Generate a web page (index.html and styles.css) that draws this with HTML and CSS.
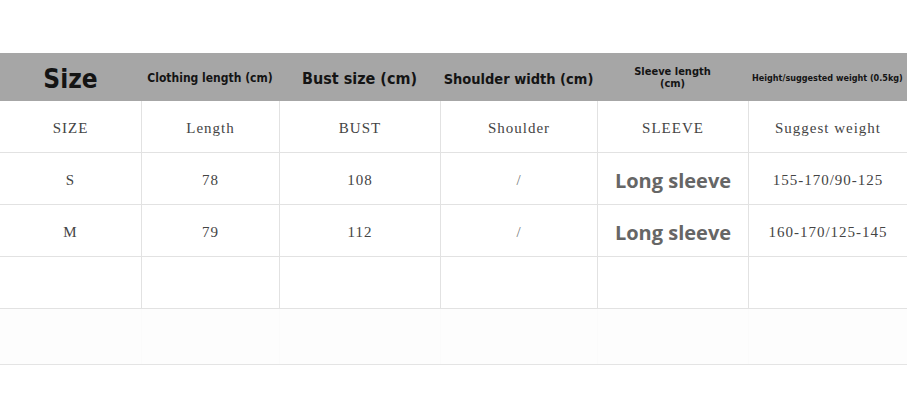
FILE: index.html
```html
<!DOCTYPE html>
<html>
<head>
<meta charset="utf-8">
<link rel="stylesheet" href="styles.css">
</head>
<body>
<div class="page">
  <div class="table">
    <div class="row head">
      <div class="cell h-size">Size</div>
      <div class="cell h-sm">Clothing length (cm)</div>
      <div class="cell h-md">Bust size (cm)</div>
      <div class="cell h-mid">Shoulder width (cm)</div>
      <div class="cell h-xs">Sleeve length<br>(cm)</div>
      <div class="cell h-xxs">Height/suggested weight (0.5kg)</div>
    </div>
    <div class="row">
      <div class="cell">SIZE</div>
      <div class="cell">Length</div>
      <div class="cell">BUST</div>
      <div class="cell">Shoulder</div>
      <div class="cell">SLEEVE</div>
      <div class="cell">Suggest weight</div>
    </div>
    <div class="row">
      <div class="cell">S</div>
      <div class="cell">78</div>
      <div class="cell">108</div>
      <div class="cell slash">/</div>
      <div class="cell long">Long sleeve</div>
      <div class="cell">155-170/90-125</div>
    </div>
    <div class="row">
      <div class="cell">M</div>
      <div class="cell">79</div>
      <div class="cell">112</div>
      <div class="cell slash">/</div>
      <div class="cell long">Long sleeve</div>
      <div class="cell">160-170/125-145</div>
    </div>
    <div class="row">
      <div class="cell"></div>
      <div class="cell"></div>
      <div class="cell"></div>
      <div class="cell"></div>
      <div class="cell"></div>
      <div class="cell"></div>
    </div>
    <div class="row faint">
      <div class="cell"></div>
      <div class="cell"></div>
      <div class="cell"></div>
      <div class="cell"></div>
      <div class="cell"></div>
      <div class="cell"></div>
    </div>
  </div>
</div>
</body>
</html>
```
FILE: styles.css
```css
html, body {
  margin: 0;
  padding: 0;
  background: #ffffff;
}
.page {
  width: 907px;
  height: 419px;
  padding-top: 53px;
  box-sizing: border-box;
  overflow: hidden;
  background: #fff;
}
.table {
  display: flex;
  flex-direction: column;
}
.row {
  display: grid;
  grid-template-columns: 141px 138px 161px 157px 151px 159px;
  height: 52px;
  border-bottom: 1px solid #e2e2e2;
  box-sizing: border-box;
}
.row .cell {
  display: flex;
  align-items: center;
  justify-content: center;
  text-align: center;
  padding-top: 3px;
  border-left: 1px solid #e2e2e2;
  font-family: "Liberation Serif", "DejaVu Serif", serif;
  font-size: 15px;
  letter-spacing: 1px;
  color: #444;
}
.row .cell:first-child {
  border-left: none;
}
.row.head {
  height: 48px;
  background: #a6a6a6;
  border-bottom: none;
}
.row.head .cell {
  padding-top: 2px;
  border-left: none;
  font-family: "DejaVu Sans Condensed", "DejaVu Sans", sans-serif;
  font-stretch: condensed;
  font-weight: 700;
  letter-spacing: 0;
  color: #141414;
  line-height: 1;
  white-space: nowrap;
}
.row.head .h-size { font-size: 26px; padding-top: 4px; }
.row.head .h-sm { font-size: 12px; }
.row.head .h-md { font-size: 16px; padding-top: 4px; }
.row.head .h-mid { font-size: 14.5px; padding-top: 4px; }
.row.head .h-xs { font-size: 11px; line-height: 1.1; }
.row.head .h-xxs { font-size: 9px; justify-content: flex-start; padding-left: 4px; }
.row .cell.long {
  font-family: "Open Sans", "Noto Sans", sans-serif;
  font-weight: 700;
  font-size: 20px;
  letter-spacing: 0;
  color: #666;
}
.row .cell.slash {
  color: #777;
}
.row.faint {
  height: 56px;
  background: #fdfdfd;
  border-bottom-color: #e4e4e4;
}
.row.faint .cell {
  border-left-color: #fbfbfb;
}
```
